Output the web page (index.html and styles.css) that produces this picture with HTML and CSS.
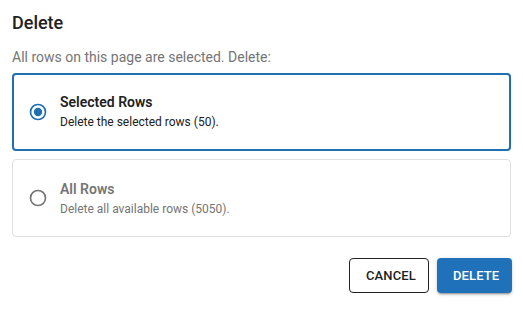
FILE: index.html
```html
<!DOCTYPE html>
<html lang="en">
<head>
<meta charset="utf-8">
<title>Delete</title>
<link rel="stylesheet" href="styles.css">
</head>
<body>
<div class="dialog">
  <h2 class="title">Delete</h2>
  <p class="subtitle">All rows on this page are selected. Delete:</p>
  <div class="options">
    <label class="option option-selected">
      <svg class="radio radio-on" viewBox="0 0 24 24" width="20" height="20" aria-hidden="true">
        <circle cx="12" cy="12" r="9" fill="none" stroke="currentColor" stroke-width="2"/>
        <circle cx="12" cy="12" r="5" fill="currentColor"/>
      </svg>
      <span class="option-text">
        <span class="option-title">Selected Rows</span>
        <span class="option-desc">Delete the selected rows (50).</span>
      </span>
    </label>
    <label class="option">
      <svg class="radio radio-off" viewBox="0 0 24 24" width="20" height="20" aria-hidden="true">
        <circle cx="12" cy="12" r="9" fill="none" stroke="currentColor" stroke-width="2"/>
      </svg>
      <span class="option-text">
        <span class="option-title">All Rows</span>
        <span class="option-desc">Delete all available rows (5050).</span>
      </span>
    </label>
  </div>
  <div class="actions">
    <button class="btn btn-outline">Cancel</button>
    <button class="btn btn-primary">Delete</button>
  </div>
</div>
</body>
</html>
```
FILE: styles.css
```css
html, body {
  margin: 0;
  padding: 0;
  background: #ffffff;
}
body {
  font-family: Roboto, "Liberation Sans", Arial, sans-serif;
  color: #212121;
}
.dialog {
  width: 523px;
  height: 313px;
  box-sizing: border-box;
  padding: 12px 11px 20px 12px;
  display: flex;
  flex-direction: column;
}
.title {
  margin: 0;
  font-size: 18px;
  line-height: 22px;
  font-weight: 500;
  color: #212121;
}
.subtitle {
  margin: 13px 0 6px;
  font-size: 14px;
  line-height: 20px;
  color: #757575;
}
.options {
  display: flex;
  flex-direction: column;
  gap: 8px;
  margin-right: 1px;
}
.option {
  box-sizing: border-box;
  height: 78px;
  border: 1px solid #e0e0e0;
  border-radius: 4px;
  padding: 0 15px;
  display: flex;
  align-items: center;
  gap: 12px;
  cursor: pointer;
}
.option-selected {
  border: 2px solid #1f6fb2;
  padding: 0 14px;
}
.radio {
  flex: none;
  display: block;
}
.radio-on { color: #1f6fb2; }
.radio-off { color: #757575; }
.option-text {
  display: flex;
  flex-direction: column;
}
.option-title {
  font-size: 14px;
  line-height: 20px;
  font-weight: 600;
  color: #212121;
}
.option-desc {
  font-size: 12px;
  line-height: 20px;
  color: #212121;
}
.option:not(.option-selected) .option-title,
.option:not(.option-selected) .option-desc {
  color: #757575;
}
.option:not(.option-selected) .option-text {
  margin-top: 2px;
}
.actions {
  margin-top: auto;
  display: flex;
  justify-content: flex-end;
  gap: 8px;
}
.btn {
  box-sizing: border-box;
  height: 35px;
  padding: 0 16px;
  border-radius: 4px;
  font-family: inherit;
  font-size: 13px;
  font-weight: 500;
  text-transform: uppercase;
  letter-spacing: 0.1px;
  cursor: pointer;
}
.btn-outline {
  width: 80px;
  background: #ffffff;
  border: 1px solid #212121;
  color: #212121;
}
.btn-primary {
  width: 75px;
  background: #1f72ba;
  border: none;
  color: #ffffff;
  box-shadow: 0 3px 1px -2px rgba(0,0,0,0.2), 0 2px 2px 0 rgba(0,0,0,0.14), 0 1px 5px 0 rgba(0,0,0,0.12);
}
```
